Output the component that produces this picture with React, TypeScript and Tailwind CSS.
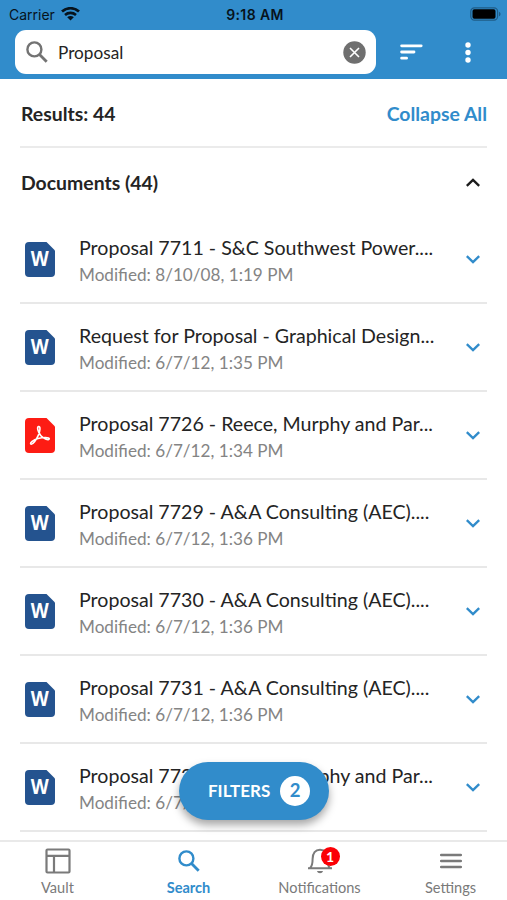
import { useState } from "react";

type Doc = {
  title: string;
  modified: string;
  type: "word" | "pdf";
};

const DOCS: Doc[] = [
  { title: "Proposal 7711 - S&C Southwest Power....", modified: "8/10/08, 1:19 PM", type: "word" },
  { title: "Request for Proposal - Graphical Design...", modified: "6/7/12, 1:35 PM", type: "word" },
  { title: "Proposal 7726 - Reece, Murphy and Par...", modified: "6/7/12, 1:34 PM", type: "pdf" },
  { title: "Proposal 7729 - A&A Consulting (AEC)....", modified: "6/7/12, 1:36 PM", type: "word" },
  { title: "Proposal 7730 - A&A Consulting (AEC)....", modified: "6/7/12, 1:36 PM", type: "word" },
  { title: "Proposal 7731 - A&A Consulting (AEC)....", modified: "6/7/12, 1:36 PM", type: "word" },
  { title: "Proposal 7727 - Reece, Murphy and Par...", modified: "6/7/12, 1:36 PM", type: "word" },
];

function SearchIcon({ className }: { className: string }) {
  return (
    <svg className={className} viewBox="0 0 22 22" fill="none" stroke="currentColor">
      <circle cx="8.4" cy="8.4" r="7" strokeWidth="2.4" />
      <path d="M13.5 13.5L20.7 20.7" strokeWidth="2.8" />
    </svg>
  );
}

function Chevron({ up = false }: { up?: boolean }) {
  return (
    <svg
      className={`w-[14px] h-[9px] shrink-0 ${up ? "rotate-180 text-[#1c1c1c]" : "text-[#318ccb]"}`}
      viewBox="0 0 14 9"
      fill="none"
      stroke="currentColor"
      strokeWidth="2.4"
    >
      <path d="M0.8 1.2L7 7.2L13.2 1.2" />
    </svg>
  );
}

function FileIcon({ type }: { type: Doc["type"] }) {
  return (
    <svg className="w-[30px] h-[35px] shrink-0" viewBox="0 0 30 35">
      <path
        d="M4 0H21.5L30 8.5V31a4 4 0 0 1-4 4H4a4 4 0 0 1-4-4V4a4 4 0 0 1 4-4Z"
        fill={type === "word" ? "#24538f" : "#fd1c14"}
      />
      {type === "word" ? (
        <text
          x="14.8"
          y="24.3"
          textAnchor="middle"
          textLength="18"
          lengthAdjust="spacingAndGlyphs"
          fill="#fff"
          fontFamily="Open Sans, sans-serif"
          fontSize="21"
          fontWeight="700"
        >
          W
        </text>
      ) : (
        <path
          d="M13.5 8.5C15.8 8.2 15.1 13.4 13.4 17.2C11.3 22 7.7 26.9 5.9 26.1C4.4 24.9 8.4 21.8 13 20.6C17.7 19.3 24 18.9 24.3 20.8C24.2 22.8 18.6 21.2 15.7 17.5C13 14.2 11.7 9.1 13.5 8.5Z"
          fill="none"
          stroke="#fff"
          strokeWidth="1.6"
        />
      )}
    </svg>
  );
}

function StatusBar() {
  return (
    <div className="grid grid-cols-3 items-center h-[28px] pl-[9px] pr-[6px] font-['Inter',sans-serif] text-[14px] text-[#07131c]">
      <div className="flex items-center gap-[6px]">
        <span>Carrier</span>
        <svg className="w-[19px] h-[14px]" viewBox="0 0 19 14" fill="none" stroke="#07131c">
          <path d="M1 4.6C5.8 0.1 13.2 0.1 18 4.6" strokeWidth="2.7" />
          <path d="M4 8C7.2 5.2 11.8 5.2 15 8" strokeWidth="2.6" />
          <path d="M9.5 13.6L6.2 10.3C8 8.7 11 8.7 12.8 10.3Z" fill="#07131c" stroke="none" />
        </svg>
      </div>
      <span className="text-center font-semibold tracking-[0.4px]">9:18 AM</span>
      <svg className="w-[31px] h-[14px] justify-self-end" viewBox="0 0 31 14">
        <rect x="0.8" y="0.8" width="26.8" height="12.4" rx="3.6" fill="none" stroke="#1f5c87" strokeWidth="1.2" />
        <rect x="2.5" y="2.3" width="23" height="9.4" rx="1.8" fill="#000" />
        <path d="M29 4.7C31 5.5 31 8.5 29 9.3Z" fill="#1f5c87" />
      </svg>
    </div>
  );
}

export default function App() {
  const [query, setQuery] = useState("Proposal");
  const [open, setOpen] = useState(true);

  return (
    <div className="relative flex flex-col w-[507px] h-[900px] overflow-hidden bg-white font-['Lato',sans-serif] text-[#242424]">
      {/* HEADER */}
      <header className="h-[79px] shrink-0 bg-[#318ccb]">
        <StatusBar />
        <div className="flex items-center pt-[2px] pl-[15px]">
          <div className="flex items-center w-[361px] h-[44px] pl-[11px] pr-[10px] rounded-[11px] bg-white">
            <SearchIcon className="w-[22px] h-[22px] shrink-0 text-[#737373]" />
            <input
              value={query}
              onChange={(e) => setQuery(e.target.value)}
              className="flex-1 min-w-0 ml-[10px] pt-[2px] text-[17.2px] outline-none"
            />
            <button onClick={() => setQuery("")}>
              <svg className="block w-[23px] h-[23px]" viewBox="0 0 23 23">
                <circle cx="11.5" cy="11.5" r="11.2" fill="#6f6f6f" />
                <path d="M7 7L16 16M16 7L7 16" stroke="#fff" strokeWidth="1.6" />
              </svg>
            </button>
          </div>
          <svg className="w-[23px] h-[16px] ml-[24px]" viewBox="0 0 23 16" stroke="#fff" strokeWidth="2.8" strokeLinecap="round">
            <path d="M1.6 1.8H21.2M1.6 8H14M1.6 14.2H6.6" />
          </svg>
          <svg className="w-[6px] h-[21px] ml-[42px]" viewBox="0 0 6 21" fill="#fff">
            <circle cx="3" cy="3" r="2.7" />
            <circle cx="3" cy="10.5" r="2.7" />
            <circle cx="3" cy="18" r="2.7" />
          </svg>
        </div>
      </header>

      {/* RESULTS */}
      <main className="flex-1 min-h-0 overflow-hidden px-[20px]">
        <div className="flex items-center justify-between h-[69px] pt-[2px] pl-[1px] border-b-2 border-[#ebebeb] text-[19.4px] font-bold">
          <span>Results: 44</span>
          <button onClick={() => setOpen(false)} className="text-[#318ccb]">
            Collapse All
          </button>
        </div>

        <button
          onClick={() => setOpen(!open)}
          className="flex items-center justify-between w-full h-[68px] pl-[1px] pr-[7px] text-[19.4px] font-bold"
        >
          <span className="pt-[2px]">Documents (44)</span>
          <Chevron up={open} />
        </button>

        {open &&
          DOCS.map((doc) => (
            <div key={doc.title} className="flex items-center h-[88px] pt-[1px] pl-[5px] pr-[7px] border-b-2 border-[#e8e8e8]">
              <FileIcon type={doc.type} />
              <div className="flex-1 min-w-0 ml-[24px] pt-[3px] whitespace-nowrap">
                <div className="text-[19.6px] leading-[27px]">{doc.title}</div>
                <div className="text-[17.15px] leading-[27px] text-[#848484]">Modified: {doc.modified}</div>
              </div>
              <Chevron />
            </div>
          ))}
      </main>

      {/* FILTERS */}
      <button className="absolute left-[179px] top-[762px] flex items-center w-[150px] h-[58px] pl-[29px] rounded-full bg-[#318ccb] text-white text-[17px] font-bold shadow-[0_5px_9px_rgba(0,0,0,0.35)]">
        <span>FILTERS</span>
        <span className="flex items-center justify-center w-[30px] h-[30px] ml-auto mr-[19px] rounded-full bg-white text-[#318ccb] text-[18.5px]">
          2
        </span>
      </button>

      {/* TAB BAR */}
      <nav className="grid grid-cols-4 w-[524px] -ml-[8px] shrink-0 h-[60px] border-t-2 border-[#e9e9e9] bg-white text-[14.6px] leading-[20px] text-[#7a7a7a]">
        <div className="flex flex-col items-center pt-[6px]">
          <svg className="w-[26px] h-[26px]" viewBox="0 0 26 26" fill="none" stroke="currentColor" strokeWidth="2.2">
            <rect x="1.5" y="1.5" width="23" height="23" rx="1" />
            <path d="M1.5 7.8H24.5M9 7.8V24.5" />
          </svg>
          <span className="mt-[4px]">Vault</span>
        </div>
        <div className="flex flex-col items-center pt-[8px] font-bold text-[#318ccb]">
          <SearchIcon className="w-[22px] h-[22px]" />
          <span className="mt-[6px]">Search</span>
        </div>
        <div className="flex flex-col items-center pt-[6px]">
          <div className="relative">
            <svg className="w-[26px] h-[26px]" viewBox="0 0 26 26" fill="none" stroke="currentColor" strokeWidth="2">
              <path d="M1 20.3H25M3 20C5 18.5 5.6 16 5.6 11C5.6 5 8.4 1.8 13 1.8S20.4 5 20.4 11C20.4 16 21 18.5 23 20" />
              <path d="M10 23C10.7 26 15.3 26 16 23Z" fill="currentColor" stroke="none" />
            </svg>
            <span className="absolute left-[14px] top-[-1px] flex items-center justify-center w-[19px] h-[19px] rounded-full bg-[#fb0006] text-white text-[14px] font-bold">
              1
            </span>
          </div>
          <span className="mt-[4px]">Notifications</span>
        </div>
        <div className="flex flex-col items-center pt-[6px]">
          <svg className="w-[22px] h-[26px]" viewBox="0 0 22 26" stroke="currentColor" strokeWidth="2.4" strokeLinecap="round">
            <path d="M1.1 7H20.9M1.1 13H20.9M1.1 19H20.9" />
          </svg>
          <span className="mt-[4px]">Settings</span>
        </div>
      </nav>
    </div>
  );
}
